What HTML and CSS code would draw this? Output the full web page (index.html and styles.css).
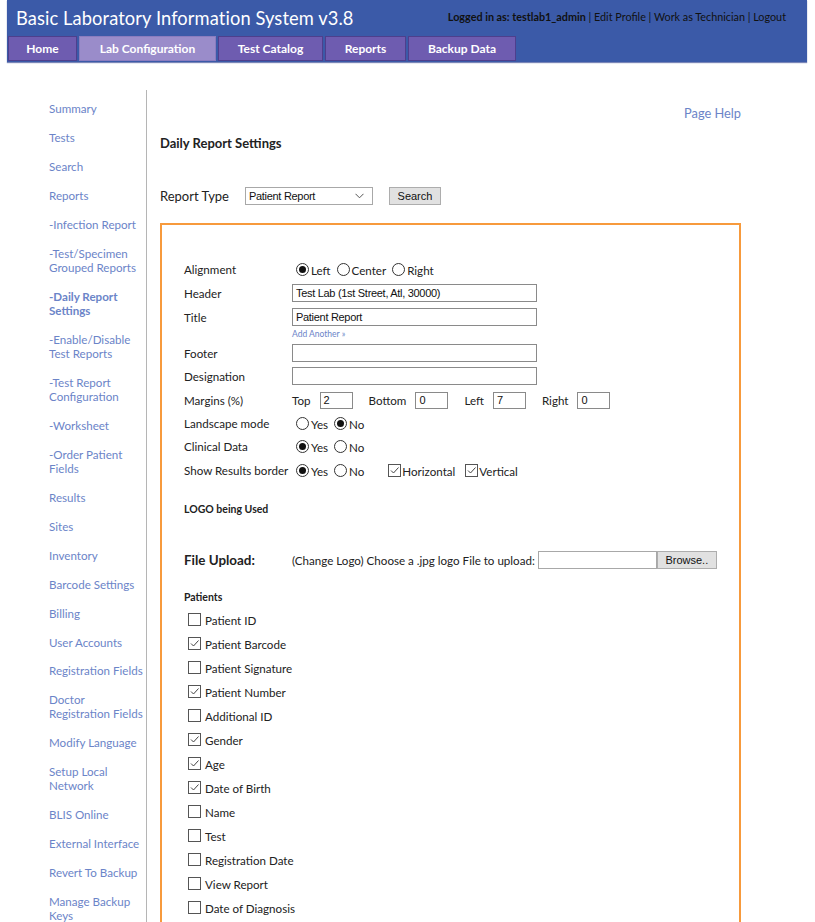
FILE: index.html
```html
<!DOCTYPE html>
<html>
<head>
<meta charset="utf-8">
<link rel="stylesheet" href="styles.css">
</head>
<body>
<div class="header">
  <div class="topbar">
    <div class="apptitle">Basic Laboratory Information System v3.8</div>
    <div class="userinfo"><b>Logged in as: testlab1_admin</b> | Edit Profile | Work as Technician | Logout</div>
  </div>
  <div class="tabs">
    <div class="tab w-home">Home</div>
    <div class="tab active w-lab">Lab Configuration</div>
    <div class="tab w-cat">Test Catalog</div>
    <div class="tab w-rep">Reports</div>
    <div class="tab w-bak">Backup Data</div>
  </div>
</div>
<div class="main">
  <div class="sidebar">
    <div class="nav">Summary</div>
    <div class="nav">Tests</div>
    <div class="nav">Search</div>
    <div class="nav">Reports</div>
    <div class="nav">-Infection Report</div>
    <div class="nav">-Test/Specimen<br>Grouped Reports</div>
    <div class="nav current">-Daily Report<br>Settings</div>
    <div class="nav">-Enable/Disable<br>Test Reports</div>
    <div class="nav">-Test Report<br>Configuration</div>
    <div class="nav">-Worksheet</div>
    <div class="nav">-Order Patient<br>Fields</div>
    <div class="nav">Results</div>
    <div class="nav">Sites</div>
    <div class="nav">Inventory</div>
    <div class="nav">Barcode Settings</div>
    <div class="nav">Billing</div>
    <div class="nav">User Accounts</div>
    <div class="nav">Registration Fields</div>
    <div class="nav">Doctor<br>Registration Fields</div>
    <div class="nav">Modify Language</div>
    <div class="nav">Setup Local<br>Network</div>
    <div class="nav">BLIS Online</div>
    <div class="nav">External Interface</div>
    <div class="nav">Revert To Backup</div>
    <div class="nav">Manage Backup<br>Keys</div>
  </div>
  <div class="content">
    <div class="helprow"><span class="help">Page Help</span></div>
    <div class="pagetitle">Daily Report Settings</div>
    <div class="typerow">
      <span class="typelabel">Report Type</span>
      <span class="select">Patient Report<svg class="chev" width="9" height="6" viewBox="0 0 9 6"><path d="M0.5 0.8 L4.5 4.8 L8.5 0.8" fill="none" stroke="#555" stroke-width="1"/></svg></span>
      <span class="btn">Search</span>
    </div>
    <div class="box">
      <div class="row h24">
        <span class="lbl">Alignment</span>
        <span class="opts"><span class="radio on"></span><span class="otext">Left</span><span class="radio"></span><span class="otext">Center</span><span class="radio"></span><span class="otext">Right</span></span>
      </div>
      <div class="row h24"><span class="lbl">Header</span><span class="input wide">Test Lab (1st Street, Atl, 30000)</span></div>
      <div class="row h24"><span class="lbl">Title</span><span class="input wide">Patient Report</span></div>
      <div class="row addrow"><span class="lbl"></span><span class="addlink">Add Another »</span></div>
      <div class="row h22"><span class="lbl">Footer</span><span class="input wide"></span></div>
      <div class="row h24"><span class="lbl">Designation</span><span class="input wide"></span></div>
      <div class="row h24">
        <span class="lbl">Margins (%)</span>
        <span class="margins">
          <span class="mlbl">Top</span><span class="input small">2</span>
          <span class="mlbl">Bottom</span><span class="input small">0</span>
          <span class="mlbl">Left</span><span class="input small">7</span>
          <span class="mlbl">Right</span><span class="input small">0</span>
        </span>
      </div>
      <div class="row h22">
        <span class="lbl">Landscape mode</span>
        <span class="opts"><span class="radio"></span><span class="otext">Yes</span><span class="radio on"></span><span class="otext">No</span></span>
      </div>
      <div class="row h24">
        <span class="lbl">Clinical Data</span>
        <span class="opts"><span class="radio on"></span><span class="otext">Yes</span><span class="radio"></span><span class="otext">No</span></span>
      </div>
      <div class="row h24">
        <span class="lbl">Show Results border</span>
        <span class="opts"><span class="radio on"></span><span class="otext">Yes</span><span class="radio"></span><span class="otext">No</span>
          <span class="cb sp"><svg width="11" height="11" viewBox="0 0 11 11"><path d="M2 5.5 L4.5 8 L9.5 2.5" fill="none" stroke="#444" stroke-width="1"/></svg></span><span class="otext">Horizontal</span>
          <span class="cb"><svg width="11" height="11" viewBox="0 0 11 11"><path d="M2 5.5 L4.5 8 L9.5 2.5" fill="none" stroke="#444" stroke-width="1"/></svg></span><span class="otext">Vertical</span>
        </span>
      </div>
      <div class="logo">LOGO being Used</div>
      <div class="upload">
        <span class="uplabel">File Upload:</span>
        <span class="uptext">(Change Logo) Choose a .jpg logo File to upload:</span>
        <span class="filebox"></span><span class="browse">Browse..</span>
      </div>
      <div class="patients">Patients</div>
      <div class="cbrow"><span class="cb"></span><span class="ctext">Patient ID</span></div>
      <div class="cbrow"><span class="cb"><svg width="11" height="11" viewBox="0 0 11 11"><path d="M2 5.5 L4.5 8 L9.5 2.5" fill="none" stroke="#444" stroke-width="1"/></svg></span><span class="ctext">Patient Barcode</span></div>
      <div class="cbrow"><span class="cb"></span><span class="ctext">Patient Signature</span></div>
      <div class="cbrow"><span class="cb"><svg width="11" height="11" viewBox="0 0 11 11"><path d="M2 5.5 L4.5 8 L9.5 2.5" fill="none" stroke="#444" stroke-width="1"/></svg></span><span class="ctext">Patient Number</span></div>
      <div class="cbrow"><span class="cb"></span><span class="ctext">Additional ID</span></div>
      <div class="cbrow"><span class="cb"><svg width="11" height="11" viewBox="0 0 11 11"><path d="M2 5.5 L4.5 8 L9.5 2.5" fill="none" stroke="#444" stroke-width="1"/></svg></span><span class="ctext">Gender</span></div>
      <div class="cbrow"><span class="cb"><svg width="11" height="11" viewBox="0 0 11 11"><path d="M2 5.5 L4.5 8 L9.5 2.5" fill="none" stroke="#444" stroke-width="1"/></svg></span><span class="ctext">Age</span></div>
      <div class="cbrow"><span class="cb"><svg width="11" height="11" viewBox="0 0 11 11"><path d="M2 5.5 L4.5 8 L9.5 2.5" fill="none" stroke="#444" stroke-width="1"/></svg></span><span class="ctext">Date of Birth</span></div>
      <div class="cbrow"><span class="cb"></span><span class="ctext">Name</span></div>
      <div class="cbrow"><span class="cb"></span><span class="ctext">Test</span></div>
      <div class="cbrow"><span class="cb"></span><span class="ctext">Registration Date</span></div>
      <div class="cbrow"><span class="cb"></span><span class="ctext">View Report</span></div>
      <div class="cbrow"><span class="cb"></span><span class="ctext">Date of Diagnosis</span></div>
    </div>
  </div>
</div>
</body>
</html>
```

FILE: styles.css
```css
html, body {
  margin: 0;
  padding: 0;
  background: #fff;
  overflow: hidden;
}
body {
  font-family: Lato, "DejaVu Sans", sans-serif;
  color: #222;
  width: 815px;
  height: 922px;
}
.header {
  margin-left: 7px;
  width: 800px;
  height: 62px;
  background: #3b5aa8;
  box-shadow: 0 1px 1px #7a86b8;
}
.topbar {
  display: flex;
  justify-content: space-between;
  align-items: flex-start;
  height: 36px;
}
.apptitle {
  color: #fff;
  font-size: 18.3px;
  padding-left: 9px;
  padding-top: 8px;
  line-height: 20px;
  letter-spacing: 0.1px;
  white-space: nowrap;
  flex: none;
}
.userinfo {
  font-size: 10.8px;
  color: #111;
  padding-top: 11px;
  padding-right: 21px;
  line-height: 12px;
  white-space: nowrap;
  flex: none;
}
.userinfo b {
  font-weight: bold;
}
.tabs {
  display: flex;
  gap: 2px;
  padding-left: 1px;
}
.tab {
  height: 23px;
  background: #6e5cb0;
  border: 1px solid #4e3f8d;
  color: #fff;
  font-weight: bold;
  font-size: 12px;
  line-height: 23px;
  text-align: center;
  box-sizing: content-box;
}
.tab.active {
  background: #9a8cca;
  border-color: #8a7cbf;
}
.w-home { width: 67px; }
.w-lab { width: 135px; }
.w-cat { width: 103px; }
.w-rep { width: 79px; }
.w-bak { width: 106px; }

.main {
  display: flex;
  margin-top: 28px;
}
.sidebar {
  width: 97px;
  padding-left: 49px;
  padding-top: 12px;
  border-right: 1px solid #b5b5b5;
  height: 900px;
  box-sizing: content-box;
}
.nav {
  font-size: 11.6px;
  line-height: 14px;
  color: #6b84c8;
  margin-bottom: 14.97px;
  white-space: nowrap;
}
.nav.current {
  font-weight: bold;
}
.content {
  padding-left: 13px;
  width: 581px;
}
.helprow {
  display: flex;
  justify-content: flex-end;
  padding-top: 16px;
  height: 15px;
}
.help {
  font-size: 12.8px;
  color: #6b84c8;
  line-height: 15px;
}
.pagetitle {
  font-size: 13px;
  font-weight: bold;
  margin-top: 15px;
  line-height: 15px;
  color: #222;
}
.typerow {
  display: flex;
  align-items: center;
  margin-top: 36px;
  height: 18px;
}
.typelabel {
  font-size: 13px;
  margin-right: 16px;
}
.select {
  display: flex;
  justify-content: space-between;
  align-items: center;
  width: 115px;
  height: 16px;
  border: 1px solid #a8a8a8;
  padding: 0 8px 0 3px;
  font-family: "Liberation Sans", Arial, sans-serif;
  font-size: 11px;
  letter-spacing: -0.3px;
  color: #111;
}
.btn {
  margin-left: 16px;
  width: 50px;
  height: 16px;
  background: #e1e1e1;
  border: 1px solid #adadad;
  font-family: "Liberation Sans", Arial, sans-serif;
  font-size: 11px;
  text-align: center;
  line-height: 16px;
  color: #111;
}
.box {
  margin-top: 18px;
  border: 2px solid #f79a3c;
  height: 760px;
  padding-top: 32px;
  padding-left: 22px;
  box-sizing: border-box;
}
.row {
  display: flex;
  align-items: center;
  height: 24px;
  font-size: 11.6px;
}
.h24 { height: 24px; }
.h22 { height: 22px; }
.lbl {
  width: 108px;
  flex: none;
  color: #222;
}
.opts {
  display: flex;
  align-items: center;
}
.radio {
  width: 13px;
  height: 13px;
  border: 1px solid #333;
  border-radius: 50%;
  position: relative;
  box-sizing: border-box;
  margin-left: 4px;
  margin-right: 2px;
  flex: none;
}
.radio.on::after {
  content: "";
  position: absolute;
  left: 2px;
  top: 2px;
  width: 7px;
  height: 7px;
  border-radius: 50%;
  background: #111;
}
.otext {
  margin-right: 2px;
  padding-top: 3px;
}
.input {
  border: 1px solid #8a8a8a;
  height: 17px;
  box-sizing: border-box;
  font-family: "Liberation Sans", Arial, sans-serif;
  font-size: 11px;
  letter-spacing: -0.3px;
  line-height: 15px;
  padding-left: 3px;
  color: #111;
}
.input.wide {
  width: 245px;
  height: 18px;
  line-height: 16px;
}
.addrow {
  height: 13px;
  align-items: flex-start;
}
.addlink {
  font-size: 8.5px;
  line-height: 11px;
  color: #6b84c8;
}
.margins {
  display: flex;
  align-items: center;
}
.mlbl {
  margin-right: 9px;
}
.input.small {
  width: 33px;
  margin-right: 16px;
}
.cb {
  width: 13px;
  height: 13px;
  border: 1px solid #555;
  box-sizing: border-box;
  display: flex;
  align-items: center;
  justify-content: center;
  flex: none;
  margin-left: 8px;
  margin-right: 1px;
}
.cb svg {
  display: block;
}
.cb.sp {
  margin-left: 22px;
}
.logo {
  font-size: 10.5px;
  font-weight: bold;
  margin-top: 20px;
  height: 14px;
  line-height: 14px;
}
.upload {
  display: flex;
  align-items: center;
  margin-top: 35px;
  height: 18px;
}
.uplabel {
  font-size: 13.4px;
  font-weight: bold;
  width: 108px;
  flex: none;
}
.uptext {
  font-size: 11.6px;
  margin-right: 3px;
}
.filebox {
  width: 119px;
  height: 18px;
  border: 1px solid #a8a8a8;
  box-sizing: border-box;
}
.browse {
  width: 60px;
  height: 18px;
  background: #e1e1e1;
  border: 1px solid #adadad;
  box-sizing: border-box;
  font-family: "Liberation Sans", Arial, sans-serif;
  font-size: 11px;
  text-align: center;
  line-height: 16px;
  color: #111;
}
.patients {
  font-size: 10.5px;
  font-weight: bold;
  margin-top: 21px;
  height: 14px;
  line-height: 14px;
  margin-bottom: 3px;
}
.cbrow {
  display: flex;
  align-items: center;
  height: 24px;
  padding-left: 4px;
  font-size: 11.6px;
}
.cbrow .cb {
  width: 13px;
  height: 13px;
  margin-left: 0;
  margin-right: 4px;
}
.ctext {
  padding-top: 2px;
}
```
